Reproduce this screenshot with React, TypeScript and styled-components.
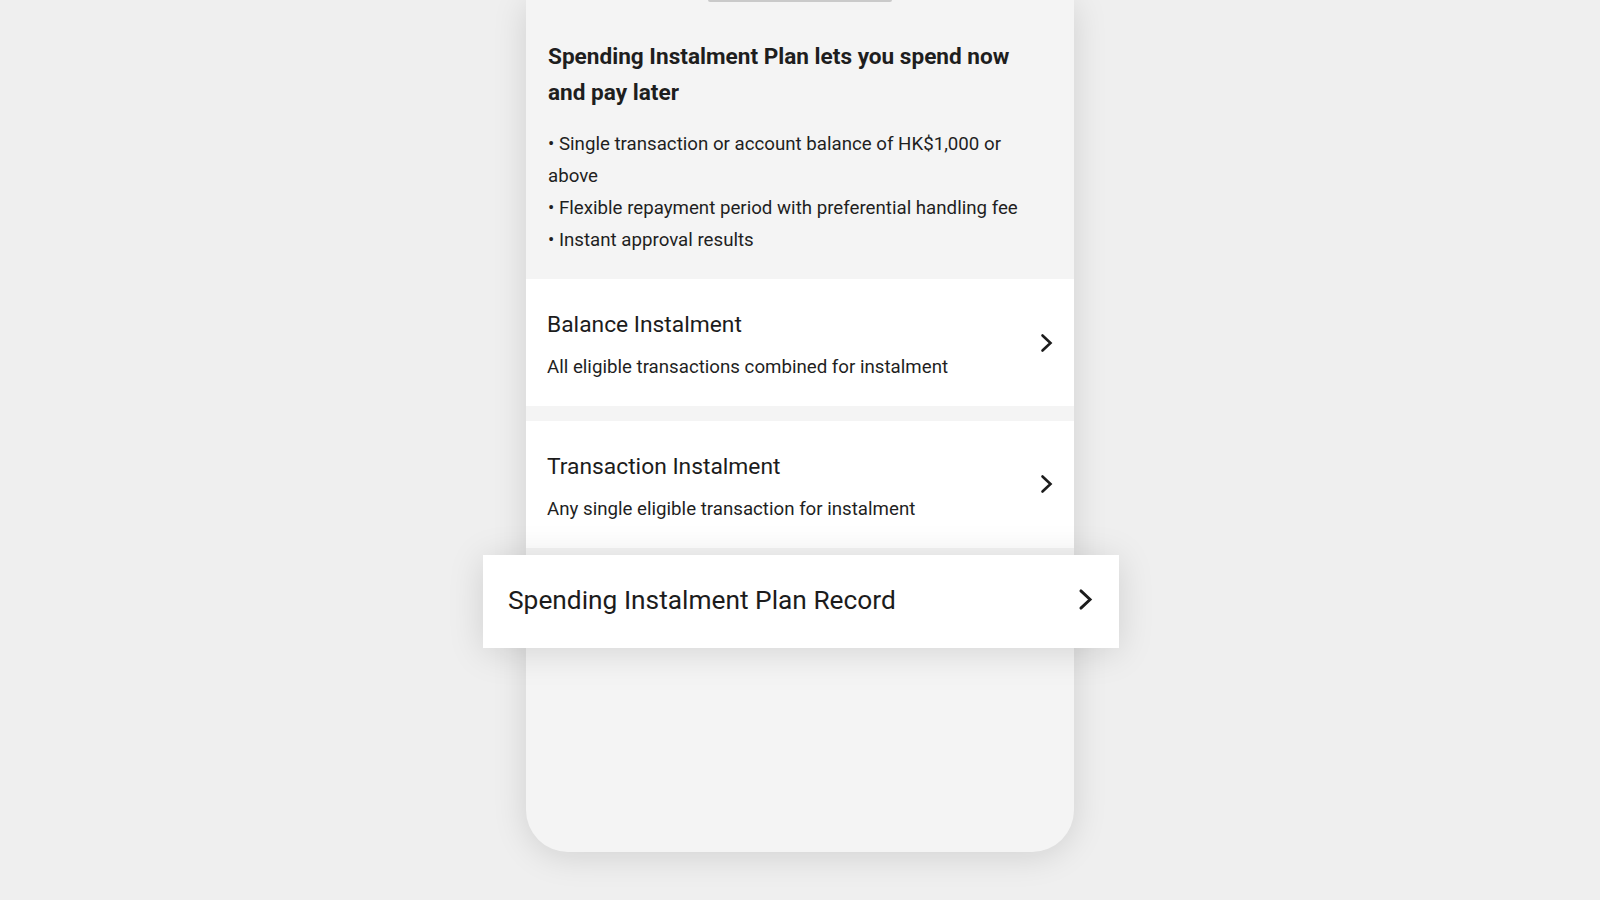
import React from 'react'
import styled, { createGlobalStyle } from 'styled-components'

const GlobalStyle = createGlobalStyle`
  html, body {
    margin: 0;
    padding: 0;
    background: #efefef;
    font-family: Roboto, "Liberation Sans", sans-serif;
    color: #1f1f1f;
  }
`

type TInstalment = {
  title: string,
  subtitle: string,
}

const instalments: TInstalment[] = [
  { title: 'Balance Instalment', subtitle: 'All eligible transactions combined for instalment' },
  { title: 'Transaction Instalment', subtitle: 'Any single eligible transaction for instalment' },
]

const bullets = [
  'Single transaction or account balance of HK$1,000 or above',
  'Flexible repayment period with preferential handling fee',
  'Instant approval results',
]

function Chevron({ size }: { size: 'small' | 'large' }) {
  const w = size === 'large' ? 15 : 13
  const h = size === 'large' ? 23 : 20
  return (
    <ChevronIcon width={w} height={h} viewBox="0 0 13 20" fill="none">
      <polyline
        points="2.5,2.5 10.5,10 2.5,17.5"
        stroke="#1c1c1c"
        strokeWidth={size === 'large' ? 2.5 : 2.6}
        strokeLinecap="round"
        strokeLinejoin="miter"
      />
    </ChevronIcon>
  )
}

function App() {
  return (
    <>
      <GlobalStyle />
      <Page>
        <Phone>
          <Handle />
          <Intro>
            <Heading>Spending Instalment Plan lets you spend now and pay later</Heading>
            <Bullets>
              {bullets.map((b) => (
                <li key={b}>• {b}</li>
              ))}
            </Bullets>
          </Intro>
          <ItemList>
            {instalments.map((item) => (
              <MenuItem key={item.title}>
                <ItemText>
                  <ItemTitle>{item.title}</ItemTitle>
                  <ItemSubtitle>{item.subtitle}</ItemSubtitle>
                </ItemText>
                <Chevron size="small" />
              </MenuItem>
            ))}
          </ItemList>
          <RecordCard>
            <RecordLabel>Spending Instalment Plan Record</RecordLabel>
            <Chevron size="large" />
          </RecordCard>
        </Phone>
      </Page>
    </>
  )
}

const Page = styled.div`
  height: 900px;
  overflow: hidden;
  display: flex;
  justify-content: center;
`

const Phone = styled.div`
  width: 548px;
  height: 852px;
  display: flex;
  flex-direction: column;
  background: #f4f4f4;
  border-radius: 0 0 42px 42px;
  box-shadow: 0 4px 34px rgba(0, 0, 0, 0.13);
`

const Handle = styled.div`
  align-self: center;
  width: 184px;
  height: 2px;
  background: #cacaca;
  border-radius: 0 0 2px 2px;
`

const Intro = styled.div`
  padding: 37px 30px 23px 22px;
`

const Heading = styled.h1`
  margin: 0;
  font-size: 22.6px;
  line-height: 36px;
  font-weight: 700;
  color: #1e1e1e;
`

const Bullets = styled.ul`
  list-style: none;
  margin: 17px 0 0;
  padding: 0;
  font-size: 18.7px;
  line-height: 32px;
  color: #1f1f1f;
`

const ItemList = styled.div`
  display: flex;
  flex-direction: column;
  gap: 14.5px;
`

const MenuItem = styled.div`
  display: flex;
  align-items: center;
  justify-content: space-between;
  background: #ffffff;
  padding: 30.7px 21px 27px 21px;
`

const ItemText = styled.div`
  display: flex;
  flex-direction: column;
  gap: 15.7px;
`

const ItemTitle = styled.div`
  font-size: 22.8px;
  line-height: 30px;
  color: #1c1c1c;
`

const ItemSubtitle = styled.div`
  font-size: 18.7px;
  line-height: 24px;
  color: #1f1f1f;
`

const ChevronIcon = styled.svg`
  flex-shrink: 0;
  margin-bottom: 4px;
`

const RecordCard = styled.div`
  margin: 7px -45px 0 -43px;
  height: 93px;
  display: flex;
  align-items: center;
  justify-content: space-between;
  padding: 0 26px 0 25px;
  background: #ffffff;
  box-shadow: 0 4px 36px rgba(0, 0, 0, 0.13);
  position: relative;
`

const RecordLabel = styled.div`
  font-size: 26.3px;
  line-height: 32px;
  margin-top: -3px;
  color: #1c1c1c;
`

export default App
